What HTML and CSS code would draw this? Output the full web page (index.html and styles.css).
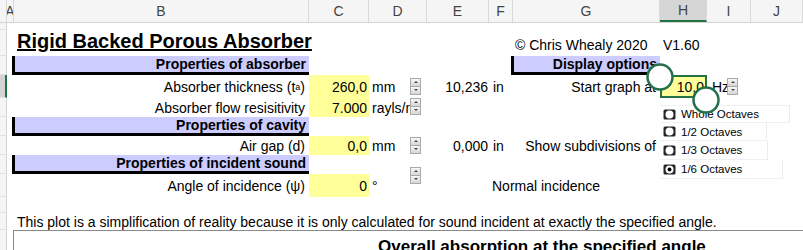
FILE: index.html
```html
<!doctype html>
<html lang="en">
  <head>
    <meta charset="UTF-8" />
    <title>Rigid Backed Porous Absorber</title>
    <link rel="stylesheet" href="styles.css">
  </head>
  <body>
    <div class="sheet">
      <!-- column letters -->
      <div class="row colheads">
        <div></div><div>A</div><div>B</div><div>C</div><div>D</div><div>E</div>
        <div>F</div><div>G</div><div class="sel">H</div><div>I</div><div>J</div>
      </div>

      <div class="row r1"><div class="rh"></div></div>

      <div class="row r2">
        <div class="rh"></div><div></div>
        <div class="title">Rigid Backed Porous Absorber</div>
        <div></div><div></div><div></div>
        <div class="copy">© Chris Whealy 2020</div>
        <div class="unit">V1.60</div>
      </div>

      <div class="row r3">
        <div class="rh"></div><div></div>
        <div class="sec">Properties of absorber</div>
        <div></div><div></div><div></div><div></div>
        <div class="sec">Display options</div>
      </div>

      <div class="row r4">
        <div class="rh active"></div><div></div>
        <div class="lbl">Absorber thickness (t<span class="sub">a</span>)</div>
        <div class="inp">260,0</div>
        <div class="unit">mm</div>
        <div class="num">10,236</div>
        <div class="in">in</div>
        <div class="lbl">Start graph at</div>
        <div class="inp picked">10,0</div>
        <div class="hz">Hz</div>
      </div>

      <div class="row r5">
        <div class="rh"></div><div></div>
        <div class="lbl">Absorber flow resisitivity</div>
        <div class="inp">7.000</div>
        <div class="unit">rayls/m</div>
      </div>

      <div class="row r3">
        <div class="rh"></div><div></div>
        <div class="sec">Properties of cavity</div>
      </div>

      <div class="row r3">
        <div class="rh"></div><div></div>
        <div class="lbl">Air gap (d)</div>
        <div class="inp">0,0</div>
        <div class="unit">mm</div>
        <div class="num">0,000</div>
        <div class="in">in</div>
        <div class="lbl">Show subdivisions of</div>
      </div>

      <div class="row r3">
        <div class="rh"></div><div></div>
        <div class="sec">Properties of incident sound</div>
      </div>

      <div class="row r4">
        <div class="rh"></div><div></div>
        <div class="lbl">Angle of incidence (ψ)</div>
        <div class="inp">0</div>
        <div class="unit">°</div>
        <div></div>
        <div class="note">Normal incidence</div>
      </div>

      <div class="row r10"><div class="rh"></div></div>

      <div class="row r11">
        <div class="rh"></div><div></div>
        <div class="wide">This plot is a simplification of reality because it is only calculated for sound incident at exactly the specified angle.</div>
      </div>

      <div class="row rchart">
        <div class="rh"></div><div></div>
        <div class="chart">
          <div class="chart-title">Overall absorption at the specified angle</div>
        </div>
      </div>

      <!-- floating form controls -->
      <div class="spin s1"><span class="up"></span><span class="dn"></span></div>
      <div class="spin s2"><span class="up"></span><span class="dn"></span></div>
      <div class="spin s3"><span class="up"></span><span class="dn"></span></div>
      <div class="spin s4"><span class="up"></span><span class="dn"></span></div>
      <div class="spin s5"><span class="up"></span><span class="dn"></span></div>

      <div class="opts">
        <div class="opt w1">
          <svg width="13" height="11" viewBox="0 0 13 11"><rect x="0.5" y="0.5" width="12" height="10" rx="1.5" fill="#262626"/><circle cx="6.5" cy="5.5" r="4" fill="#fff"/></svg>
          Whole Octaves
        </div>
        <div class="opt w2">
          <svg width="13" height="11" viewBox="0 0 13 11"><rect x="0.5" y="0.5" width="12" height="10" rx="1.5" fill="#262626"/><circle cx="6.5" cy="5.5" r="4" fill="#fff"/></svg>
          1/2 Octaves
        </div>
        <div class="opt w3">
          <svg width="13" height="11" viewBox="0 0 13 11"><rect x="0.5" y="0.5" width="12" height="10" rx="1.5" fill="#262626"/><circle cx="6.5" cy="5.5" r="4" fill="#fff"/></svg>
          1/3 Octaves
        </div>
        <div class="opt w4">
          <svg width="13" height="11" viewBox="0 0 13 11"><rect x="0.5" y="0.5" width="12" height="10" rx="1.5" fill="#262626"/><circle cx="6.5" cy="5.5" r="4" fill="#fff"/><circle cx="6.5" cy="5.5" r="2" fill="#000"/></svg>
          1/6 Octaves
        </div>
      </div>

      <!-- selection handles -->
      <svg class="handles" width="84" height="60" viewBox="0 0 84 60">
        <circle cx="16" cy="16" r="12.5" fill="#fff" stroke="#256f4b" stroke-width="2.5"/>
        <circle cx="62" cy="39" r="12.5" fill="#fff" stroke="#256f4b" stroke-width="2.5"/>
      </svg>
    </div>
  </body>
</html>
```

FILE: styles.css
```css
body {
  margin: 0;
  font-family: "Liberation Sans", Arial, sans-serif;
  font-size: 14px;
  color: #000;
  background-color: #fff;
  overflow: hidden;
}
.sheet {
  position: relative;
  width: 803px;
  height: 250px;
  overflow: hidden;
}
.row {
  display: grid;
  grid-template-columns: 7px 7px 295px 60px 58px 62px 24px 147px 47px 44px 52px;
}
.row > div {
  display: flex;
  align-items: center;
  white-space: nowrap;
  min-width: 0;
  box-sizing: border-box;
}

/* header */
.colheads {
  height: 23px;
  background-color: #f5f5f5;
  border-bottom: 1px solid #d4d4d4;
  box-sizing: border-box;
  color: #444;
}
.colheads > div {
  justify-content: center;
  border-right: 1px solid #d9d9d9;
  overflow: hidden;
}
.colheads > .sel {
  background-color: #d6d6d6;
  border-bottom: 2px solid #217346;
}

.r1 { height: 7px; }
.r2 { height: 26px; }
.r3 { height: 19px; }
.r4 { height: 23px; }
.r5 { height: 19px; }
.r10 { height: 16px; }
.r11 { height: 17px; }
.rchart { height: 20px; }

.rh {
  background-color: #f5f5f5;
  border-right: 1px solid #d4d4d4;
  border-bottom: 1px solid #e2e2e2;
}
.rh.active {
  background-color: #d4d4d4;
  border-right: 2px solid #217346;
}

.title {
  grid-column: span 2;
  align-self: end;
  padding: 0 0 2px 3px;
  font-size: 20px;
  font-weight: bold;
  text-decoration: underline;
}
.r2 > div { align-items: flex-end; padding-bottom: 3px; }
.copy { padding-left: 2px; }

.sec {
  background-color: #ccccff;
  font-weight: bold;
  justify-content: flex-end;
  padding-right: 3px;
  margin-left: -2px;
  border-left: 3px solid #000;
  border-bottom: 3px solid #000;
}
.lbl {
  justify-content: flex-end;
  padding-right: 4px;
}
.inp {
  background-color: #ffff99;
  justify-content: flex-end;
  padding-right: 2px;
}
.inp.picked {
  box-shadow: inset 0 0 0 2px #217346;
  padding-right: 3px;
}
.unit { padding-left: 3px; }
.num {
  justify-content: flex-end;
  padding-right: 1px;
}
.in { padding-left: 4px; }
.hz { padding-left: 5px; }
.sub {
  font-size: 9px;
  vertical-align: -3px;
}
.note {
  grid-column: span 2;
  padding-left: 3px;
}
.wide {
  grid-column: 3 / -1;
  padding-left: 3px;
}

.chart {
  grid-column: 3 / -1;
  margin-left: -1px;
  border-top: 1px solid #8a8a8a;
  border-left: 1px solid #8a8a8a;
  align-items: flex-start !important;
}
.chart-title {
  padding: 6px 0 0 364px;
  font-size: 17px;
  font-weight: bold;
}

/* spin buttons */
.spin {
  position: absolute;
  left: 410px;
  width: 11px;
  height: 17px;
  display: flex;
  flex-direction: column;
}
.spin span {
  flex: 1;
  position: relative;
  border: 1px solid #a9a9a9;
  background: linear-gradient(#f7f7f7, #d6d6d6);
}
.spin span + span { border-top: none; }
.spin span::after {
  content: "";
  position: absolute;
  left: 3px;
  top: 2px;
  border-left: 2px solid transparent;
  border-right: 2px solid transparent;
  border-bottom: 2px solid #444;
}
.spin .dn::after {
  top: 2px;
  border-bottom: none;
  border-top: 2px solid #444;
}
.s1 { top: 78px; }
.s2 { top: 98px; }
.s3 { top: 137px; }
.s4 { top: 167px; }
.s5 { top: 78px; left: 727px; }

/* option buttons */
.opts {
  position: absolute;
  left: 660px;
  top: 105px;
  display: flex;
  flex-direction: column;
  align-items: flex-start;
  font-size: 11.5px;
}
.opt {
  display: flex;
  align-items: center;
  gap: 5px;
  height: 18px;
  padding-left: 3px;
  box-sizing: border-box;
  background-color: #fff;
  border-right: 1px solid #ececec;
  border-bottom: 1px solid #f0f0f0;
}
.w1 { width: 130px; border-top: 1px solid #f0f0f0; }
.w2 { width: 107px; }
.w3 { width: 108px; height: 19px; }
.w4 { width: 123px; height: 19px; }

.handles {
  position: absolute;
  left: 644px;
  top: 61px;
}
```
